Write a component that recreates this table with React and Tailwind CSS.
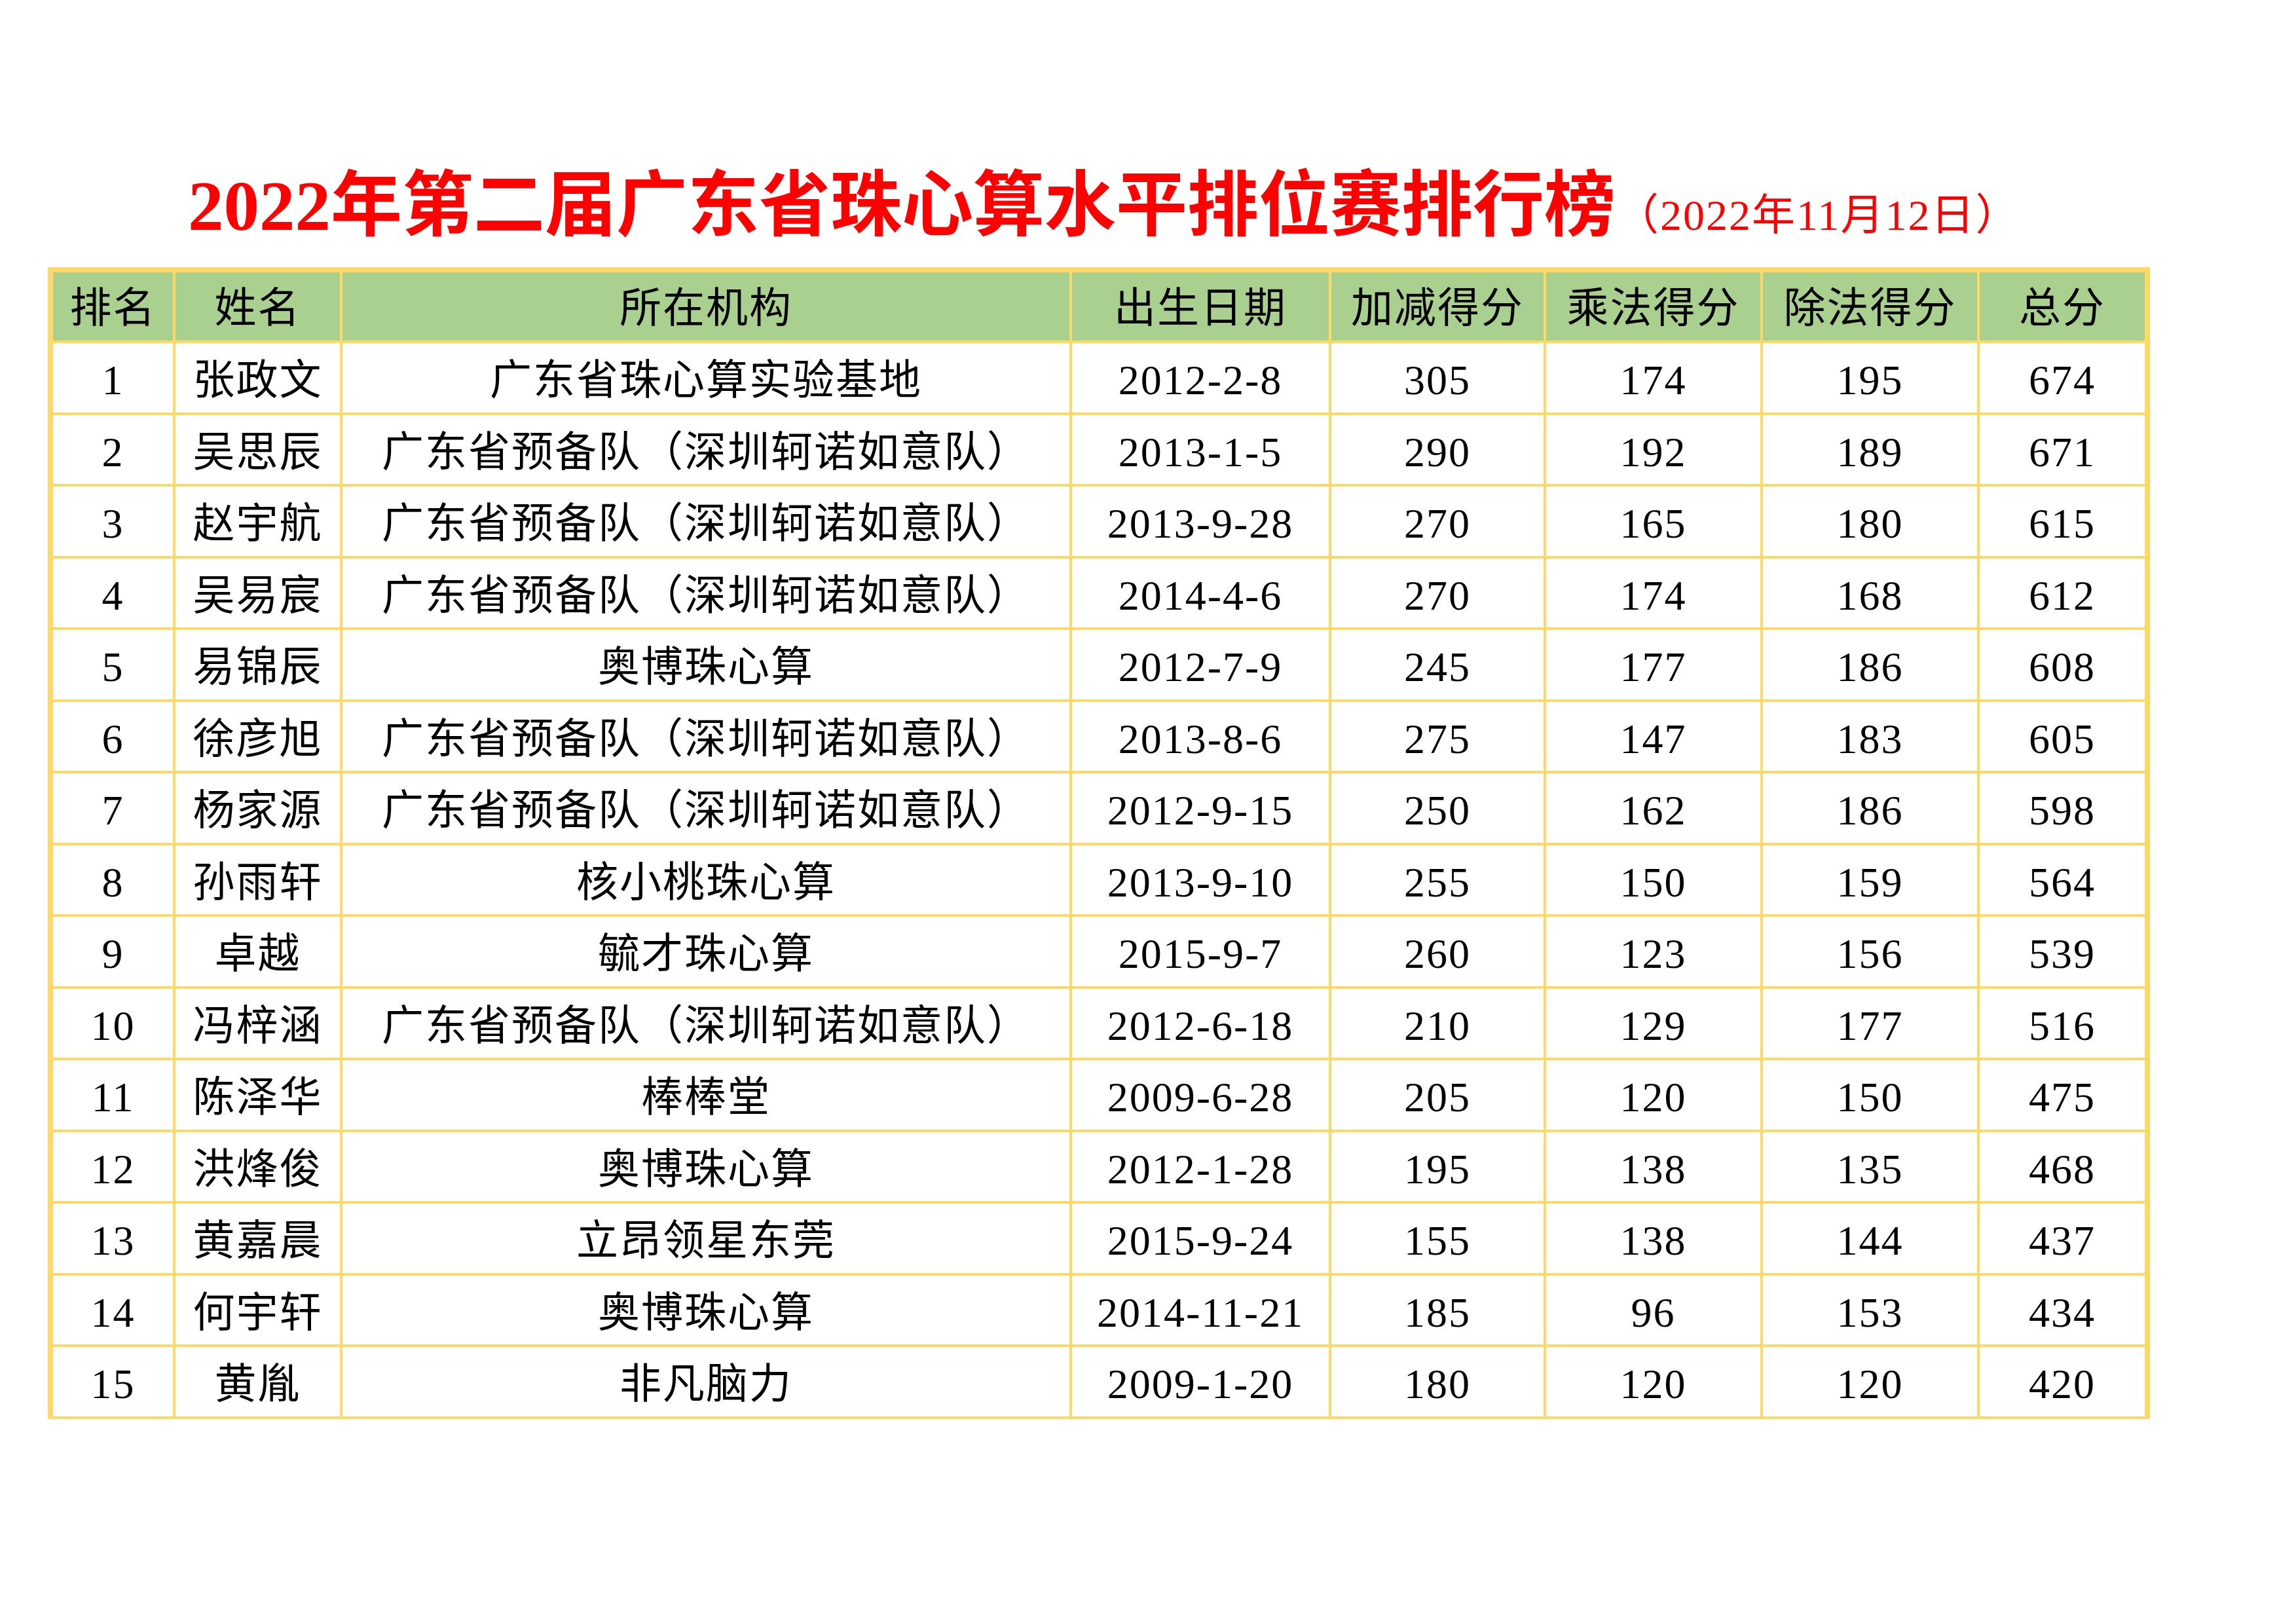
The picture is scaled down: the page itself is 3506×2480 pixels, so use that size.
const HEAD = ['排名', '姓名', '所在机构', '出生日期', '加减得分', '乘法得分', '除法得分', '总分']

const ROWS = [
  ['1', '张政文', '广东省珠心算实验基地', '2012-2-8', '305', '174', '195', '674'],
  ['2', '吴思辰', '广东省预备队（深圳轲诺如意队）', '2013-1-5', '290', '192', '189', '671'],
  ['3', '赵宇航', '广东省预备队（深圳轲诺如意队）', '2013-9-28', '270', '165', '180', '615'],
  ['4', '吴易宸', '广东省预备队（深圳轲诺如意队）', '2014-4-6', '270', '174', '168', '612'],
  ['5', '易锦辰', '奥博珠心算', '2012-7-9', '245', '177', '186', '608'],
  ['6', '徐彦旭', '广东省预备队（深圳轲诺如意队）', '2013-8-6', '275', '147', '183', '605'],
  ['7', '杨家源', '广东省预备队（深圳轲诺如意队）', '2012-9-15', '250', '162', '186', '598'],
  ['8', '孙雨轩', '核小桃珠心算', '2013-9-10', '255', '150', '159', '564'],
  ['9', '卓越', '毓才珠心算', '2015-9-7', '260', '123', '156', '539'],
  ['10', '冯梓涵', '广东省预备队（深圳轲诺如意队）', '2012-6-18', '210', '129', '177', '516'],
  ['11', '陈泽华', '棒棒堂', '2009-6-28', '205', '120', '150', '475'],
  ['12', '洪烽俊', '奥博珠心算', '2012-1-28', '195', '138', '135', '468'],
  ['13', '黄嘉晨', '立昂领星东莞', '2015-9-24', '155', '138', '144', '437'],
  ['14', '何宇轩', '奥博珠心算', '2014-11-21', '185', '96', '153', '434'],
  ['15', '黄胤', '非凡脑力', '2009-1-20', '180', '120', '120', '420'],
]

export default function App() {
  return (
    <div className="w-[3506px] h-[2480px] bg-white pt-[260px] pl-[73px] font-['Liberation_Serif','Noto_Sans_CJK_SC',serif]">

      {/* Title */}
      <div className="flex items-baseline pl-[214px] leading-none text-[#ff0000]">
        <span className="text-[109px] font-bold">2022年第二届广东省珠心算水平排位赛排行榜</span>
        <span className="text-[66px] tracking-[2px]">（2022年11月12日）</span>
      </div>

      {/* Ranking table */}
      <div className="mt-[39px] w-fit grid grid-cols-[183px_251px_1110px_392px_324px_327px_327px_252px] gap-[4px] bg-[#ffd966] pt-[8px] px-[8px] pb-[4px] text-black text-[64px] leading-none tracking-[2px]">
        {HEAD.map(h => (
          <div key={h} className="h-[104px] bg-[#a9d08e] flex items-center justify-center pt-[6px]">
            {h}
          </div>
        ))}
        {ROWS.map(row =>
          row.map((cell, i) => (
            <div key={row[0] + '-' + i} className="h-[105.5px] bg-white flex items-center justify-center pt-[9px]">
              {cell}
            </div>
          ))
        )}
      </div>

    </div>
  )
}
